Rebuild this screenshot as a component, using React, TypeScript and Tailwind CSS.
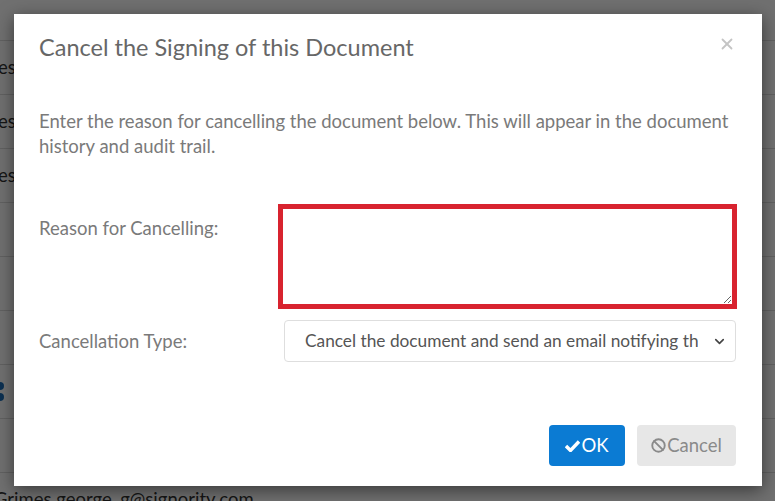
import { Ban, X, ChevronDown } from "lucide-react";

const rows = [
  { kind: "blank" },
  { kind: "text", text: "est" },
  { kind: "text", text: "est" },
  { kind: "text", text: "est" },
  { kind: "blank" },
  { kind: "blank" },
  { kind: "blank" },
  { kind: "dots" },
  { kind: "blank" },
  { kind: "email", text: "Grimes george_g@signority.com" },
];

function BackgroundTable() {
  return (
    <div className="flex flex-col">
      {rows.map((r, i) => (
        <div
          key={i}
          className={
            i === 0
              ? "h-[41px] border-b border-[#dddddd]"
              : "h-[54px] border-b border-[#dddddd] flex items-center"
          }
        >
          {r.kind === "text" && (
            <span className="ml-[-2px] text-[18.5px] text-[#333]">{r.text}</span>
          )}
          {r.kind === "dots" && (
            <span className="ml-[-4px] flex flex-col gap-[3px]">
              <span className="block w-[8px] h-[8px] rounded-full bg-[#1c6fb8]" />
              <span className="block w-[8px] h-[8px] rounded-full bg-[#1c6fb8]" />
            </span>
          )}
          {r.kind === "email" && (
            <span className="ml-[-6px] text-[18.5px] text-[#333]">{r.text}</span>
          )}
        </div>
      ))}
    </div>
  );
}

function CheckIcon() {
  return (
    <svg width="15" height="13" viewBox="0 0 15 13" className="mr-[1px]">
      <path d="M1 7 L5.5 11.5 L14 2.5" fill="none" stroke="white" strokeWidth="3.4" strokeLinejoin="miter" />
    </svg>
  );
}

export default function App() {
  return (
    <div
      className="relative w-full h-[501px] overflow-hidden bg-white"
      style={{ fontFamily: "Lato, 'Open Sans', sans-serif" }}
    >
      <BackgroundTable />
      <div className="absolute inset-0 bg-black/[0.56]" />

      <div className="absolute left-[14px] top-[14px] w-[748px] h-[472px] bg-white shadow-[0_4px_16px_rgba(0,0,0,0.5)] flex flex-col">
        <div className="flex items-start justify-between pl-[25px] pr-[26px] pt-[18px]">
          <h2 className="text-[23.5px] leading-[30px] text-[#676767]">
            Cancel the Signing of this Document
          </h2>
          <button className="mt-[3px] text-[#c4c4c4]">
            <X size={18} strokeWidth={2.4} />
          </button>
        </div>

        <p className="mt-[47px] pl-[25px] pr-[20px] text-[18.5px] leading-[25px] text-[#7a7a7a]">
          Enter the reason for cancelling the document below. This will appear in the document
          history and audit trail.
        </p>

        <div className="mt-[45px] flex pl-[25px]">
          <label className="w-[239px] pt-[12px] text-[18.5px] leading-[25px] text-[#7a7a7a]">
            Reason for Cancelling:
          </label>
          <textarea className="block w-[459px] h-[105px] border-[5px] border-[#d8232f] bg-white outline-none resize" />
        </div>

        <div className="mt-[11px] flex items-center pl-[25px]">
          <label className="w-[245px] text-[18.5px] leading-[25px] text-[#7a7a7a]">
            Cancellation Type:
          </label>
          <div className="relative w-[452px] h-[42px] rounded-[4px] border border-[#dedede] bg-white flex items-center">
            <span className="ml-[20px] w-[393px] overflow-hidden whitespace-nowrap text-[17.3px] text-[#555]">
              Cancel the document and send an email notifying the signers
            </span>
            <ChevronDown
              size={15}
              strokeWidth={2.6}
              className="absolute right-[8px] top-[13px] text-[#444]"
            />
          </div>
        </div>

        <div className="mt-auto mb-[20px] flex justify-end gap-[12px] pr-[26px]">
          <button className="h-[41px] w-[76px] rounded-[4px] bg-[#0b7bd3] text-white text-[18.5px] flex items-center justify-center">
            <CheckIcon />
            OK
          </button>
          <button className="h-[41px] w-[99px] rounded-[4px] bg-[#e7e7e7] text-[#8a8a8a] text-[18.5px] flex items-center justify-center">
            <Ban size={15} strokeWidth={3} className="mr-[1px]" />
            Cancel
          </button>
        </div>
      </div>
    </div>
  );
}
